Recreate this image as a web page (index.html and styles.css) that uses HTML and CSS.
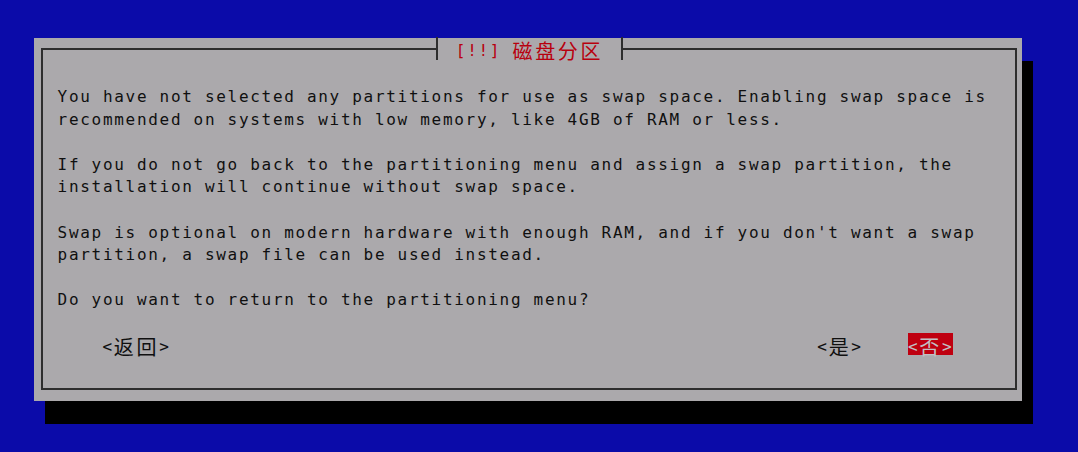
FILE: index.html
```html
<!DOCTYPE html>
<html lang="zh-CN">
<head>
<meta charset="utf-8">
<title>磁盘分区</title>
<link rel="stylesheet" href="styles.css">
</head>
<body>
<div class="screen">
  <div class="dialog">
    <div class="frame">
      <div class="titlebar">
        <span class="seg"></span><span class="tick"></span><span class="title"> [!!] <span class="cjk">磁盘分区</span> </span><span class="tick"></span><span class="seg"></span>
      </div>
      <div class="body">
        <p>You have not selected any partitions for use as swap space. Enabling swap space is<br>recommended on systems with low memory, like 4GB of RAM or less.</p>
        <p>If you do not go back to the partitioning menu and assign a swap partition, the<br>installation will continue without swap space.</p>
        <p>Swap is optional on modern hardware with enough RAM, and if you don't want a swap<br>partition, a swap file can be used instead.</p>
        <p>Do you want to return to the partitioning menu?</p>
      </div>
      <div class="buttons">
        <span class="btn">&lt;<span class="cjk">返回</span>&gt;</span>
        <div class="btn-group">
          <span class="btn">&lt;<span class="cjk">是</span>&gt;</span>
          <span class="btn sel">&lt;<span class="cjk">否</span>&gt;</span>
        </div>
      </div>
    </div>
  </div>
</div>
</body>
</html>
```
FILE: styles.css
```css
html, body {
  margin: 0;
  height: 100%;
}
body {
  background: #0b0ba9;
  font-family: "DejaVu Sans Mono", "Noto Sans CJK SC", monospace;
  font-size: 16px;
  color: #101010;
  overflow: hidden;
}
.screen {
  padding: 38px 0 0 34px;
}
.dialog {
  width: 988px;
  height: 363px;
  box-sizing: border-box;
  padding: 10px 5px 11px 7px;
  background: #aba9ac;
  box-shadow: 11px 23px 0 #000;
}
.frame {
  display: flow-root;
  height: 100%;
  box-sizing: border-box;
  border: 2px solid #2e2e2e;
  border-top: 0;
}
.titlebar {
  display: flex;
  height: 23px;
  margin: -11px -2px 0;
}
.seg {
  flex: 1;
  background: linear-gradient(#2e2e2e, #2e2e2e) 0 11px / 100% 2px no-repeat;
}
.tick {
  width: 2px;
  background: #2e2e2e;
}
.title {
  white-space: pre;
  color: #b8000e;
  letter-spacing: 1.7px;
  line-height: 23px;
  padding: 1.5px 6px 0 7px;
  box-sizing: border-box;
}
.cjk {
  font-family: "Noto Sans CJK SC", sans-serif;
  font-size: 20px;
  letter-spacing: 2.66px;
  line-height: 0;
  vertical-align: -2.8px;
}
.body {
  padding: 26.15px 0 0 14.6px;
  letter-spacing: 1.7px;
  line-height: 22.58px;
}
.body p {
  margin: 0 0 22.58px;
}
.body p:last-child {
  margin-bottom: 0;
}
.buttons {
  display: flex;
  margin-top: 20.9px;
  padding: 0 61.7px 0 59.5px;
  letter-spacing: 1.7px;
}
.btn-group {
  margin-left: auto;
  display: flex;
  gap: 45.32px;
}
.btn {
  display: block;
  height: 22.6px;
  box-sizing: border-box;
  padding-top: 2.75px;
  line-height: 22.6px;
  white-space: pre;
}
.btn.sel {
  background: #bf0010;
  color: #c2c0c4;
}
```
